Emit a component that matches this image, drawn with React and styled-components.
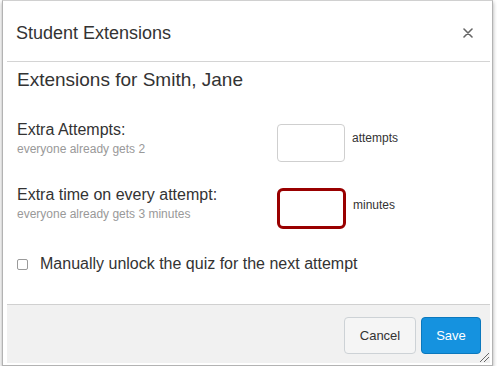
import styled, { createGlobalStyle } from "styled-components";

const GlobalStyle = createGlobalStyle`
    body {
        margin: 0;
        background: #fff;
        font-family: "Liberation Sans", Arial, sans-serif;
        color: #333;
    }
`;

export default function App() {
    return (
        <>
            <GlobalStyle />
            <Dialog>
                <Header>
                    <Title>Student Extensions</Title>
                    <Close aria-label="close">
                        <svg width="10" height="10" viewBox="0 0 10 10">
                            <path d="M1 1 L9 9 M9 1 L1 9" stroke="#666" strokeWidth="1.6" strokeLinecap="round" />
                        </svg>
                    </Close>
                </Header>
                <Body>
                    <Heading>Extensions for Smith, Jane</Heading>
                    <Row>
                        <LabelCol>
                            <Label>Extra Attempts:</Label>
                            <Hint>everyone already gets 2</Hint>
                        </LabelCol>
                        <Field>
                            <Input type="text" $offset={4} />
                            <Unit $offset={10}>attempts</Unit>
                        </Field>
                    </Row>
                    <Row>
                        <LabelCol>
                            <Label>Extra time on every attempt:</Label>
                            <Hint>everyone already gets 3 minutes</Hint>
                        </LabelCol>
                        <Field>
                            <Input type="text" $offset={3} $error />
                            <Unit $offset={12}>minutes</Unit>
                        </Field>
                    </Row>
                    <CheckRow>
                        <Check type="checkbox" />
                        Manually unlock the quiz for the next attempt
                    </CheckRow>
                </Body>
                <Footer>
                    <Button>Cancel</Button>
                    <Button $primary>Save</Button>
                </Footer>
                <Grip width="10" height="10" viewBox="0 0 10 10">
                    <path d="M1 10 L10 1 M5 10 L10 5" stroke="#666" strokeWidth="1" />
                </Grip>
            </Dialog>
        </>
    );
}

const Dialog = styled.div`
    position: relative;
    box-sizing: border-box;
    margin-left: 2px;
    width: 491px;
    height: 366px;
    border: 1px solid #b3b3b3;
    border-top-color: #d0d0d0;
    box-shadow: 0 2px 4px rgba(0, 0, 0, 0.35);
    background: #fff;
    padding: 0 2px 2px 4px;
    display: flex;
    flex-direction: column;
`;

const Header = styled.div`
    height: 61px;
    padding-top: 4px;
    box-sizing: border-box;
    border-bottom: 1px solid #d4d4d4;
    display: flex;
    align-items: center;
    justify-content: space-between;
    padding-left: 9px;
    padding-right: 17px;
`;

const Title = styled.h1`
    margin: 0;
    font-size: 18px;
    font-weight: 400;
    color: #333;
`;

const Close = styled.button`
    border: 0;
    background: none;
    padding: 0;
    display: flex;
    cursor: pointer;
`;

const Body = styled.div`
    flex: 1;
    padding: 6px 0 0 10px;
`;

const Heading = styled.h2`
    margin: 0 0 28px;
    font-size: 19px;
    line-height: 24px;
    font-weight: 400;
    color: #333;
`;

const Row = styled.div`
    display: flex;
    height: 65px;
`;

const LabelCol = styled.div`
    width: 260px;
    display: flex;
    flex-direction: column;
`;

const Label = styled.div`
    font-size: 16px;
    line-height: 20px;
`;

const Hint = styled.div`
    font-size: 12px;
    line-height: 16px;
    color: #999;
    margin-top: 1px;
`;

const Field = styled.div`
    display: flex;
    align-items: flex-start;
`;

const Input = styled.input`
    box-sizing: border-box;
    margin: ${p => p.$offset}px 0 0;
    width: ${p => (p.$error ? 69 : 68)}px;
    height: ${p => (p.$error ? 41 : 38)}px;
    border: ${p => (p.$error ? "3px solid #990000" : "1px solid #cfcfcf")};
    border-radius: ${p => (p.$error ? 6 : 4)}px;
    background: #fff;
    outline: none;
    font-size: 14px;
`;

const Unit = styled.span`
    margin: ${p => p.$offset}px 0 0 7px;
    font-size: 12px;
    line-height: 16px;
    color: #333;
`;

const CheckRow = styled.label`
    margin-top: 4px;
    display: flex;
    align-items: center;
    font-size: 16px;
    line-height: 20px;
    color: #333;
`;

const Check = styled.input`
    appearance: none;
    margin: 0 12px 0 0;
    width: 11px;
    height: 11px;
    border: 1px solid #9a9a9a;
    border-radius: 2px;
    background: #fff;
`;

const Footer = styled.div`
    height: 59px;
    box-sizing: border-box;
    border-top: 1px solid #d0d0d0;
    background: #f1f1f1;
    display: flex;
    justify-content: flex-end;
    align-items: flex-start;
    gap: 5px;
    padding: 12px 9px 0 0;
`;

const Button = styled.button`
    box-sizing: border-box;
    height: 37px;
    width: ${p => (p.$primary ? 60 : 72)}px;
    border-radius: 4px;
    border: 1px solid ${p => (p.$primary ? "#0b78bd" : "#cdd2d6")};
    background: ${p => (p.$primary ? "#1592df" : "#f5f5f5")};
    color: ${p => (p.$primary ? "#fff" : "#333")};
    font-family: "Liberation Sans", Arial, sans-serif;
    font-size: 13px;
    padding: 0;
    cursor: pointer;
`;

const Grip = styled.svg`
    position: absolute;
    right: 3px;
    bottom: 3px;
`;
